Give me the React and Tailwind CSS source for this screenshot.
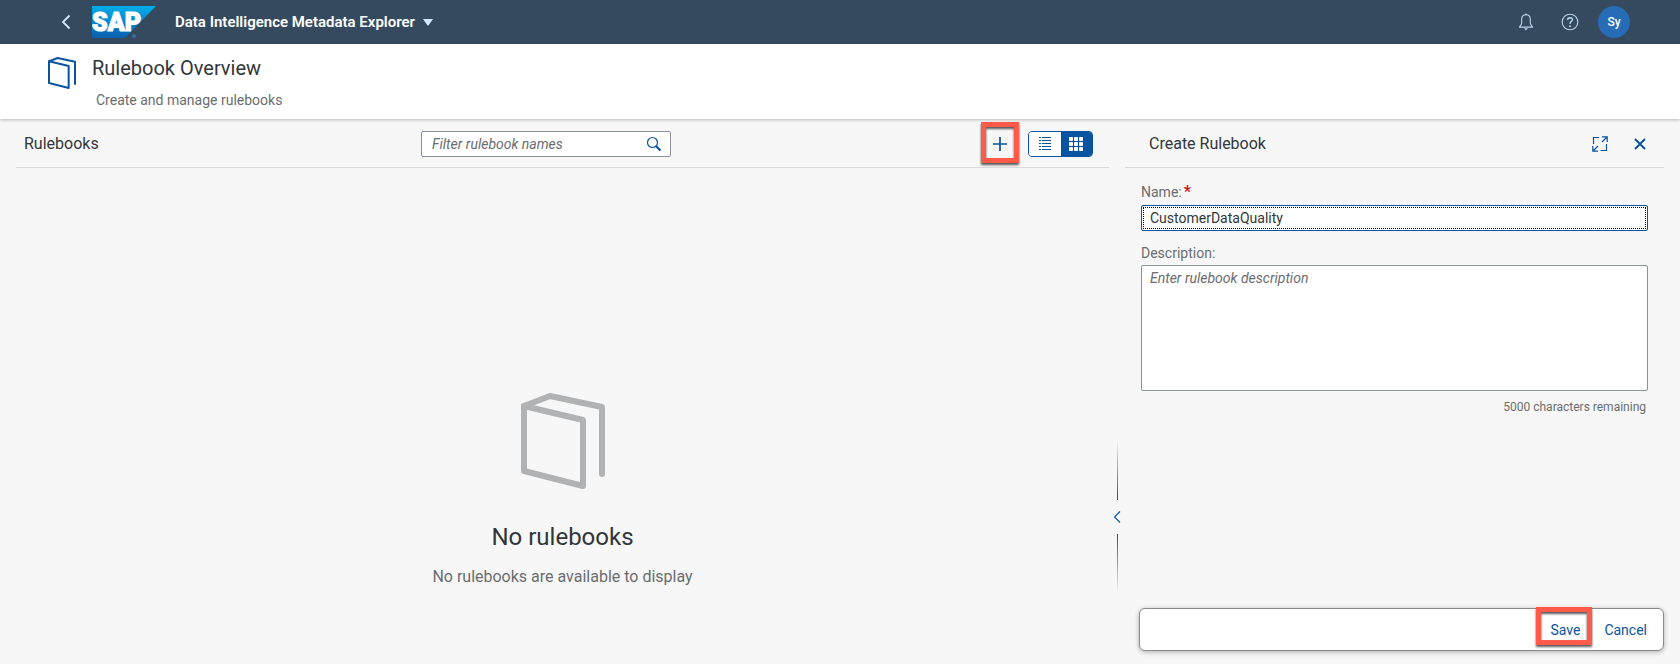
import { useState } from 'react';

function BookIcon({ className, strokeWidth }) {
  return (
    <svg viewBox="0 0 84 96" className={className} fill="none" stroke="currentColor" strokeWidth={strokeWidth} strokeLinejoin="round" strokeLinecap="round" aria-hidden="true">
      <path d="M3 13 L62 27 V93 L3 78 Z" />
      <path d="M3 13 L29 3 L81 14 V81" />
    </svg>
  );
}

function SapLogo() {
  return (
    <svg viewBox="0 0 64 32" className="h-8 w-16" role="img" aria-label="SAP">
      <defs>
        <linearGradient id="logo-fill" x1="0" y1="0" x2="0" y2="1">
          <stop offset="0" stopColor="#00aeea" />
          <stop offset="0.5" stopColor="#0a86cd" />
          <stop offset="1" stopColor="#0a5fae" />
        </linearGradient>
      </defs>
      <path d="M0 0 H64 L33 32 H0 Z" fill="url(#logo-fill)" />
      <text x="0" y="25" fill="#fff" stroke="#fff" strokeWidth="1.2" fontFamily="Roboto, sans-serif" fontWeight="900" fontSize="25">SAP</text>
      <circle cx="42" cy="30" r="1.6" fill="#2d6a9e" stroke="#3f7cae" strokeWidth="0.6" />
    </svg>
  );
}

function ShellBar() {
  return (
    <header className="flex h-11 shrink-0 items-center bg-[#354a5f] pr-[50px] pl-14 text-white">
      <button type="button" aria-label="Back" className="flex h-8 w-5 items-center justify-center text-[#d1e8ff]">
        <svg viewBox="0 0 10 16" className="h-4 w-2.5" fill="none" stroke="currentColor" strokeWidth="1.8" aria-hidden="true">
          <path d="M8.5 1.5 L2 8 L8.5 14.5" />
        </svg>
      </button>
      <a href="#home" className="ml-4">
        <SapLogo />
      </a>
      <button type="button" className="ml-[19px] flex items-center gap-2 text-[15px] font-semibold">
        Data Intelligence Metadata Explorer
        <svg viewBox="0 0 10 8" className="h-2 w-2.5 fill-[#d1e8ff]" aria-hidden="true">
          <path d="M0 1 H10 L5.6 7.2 Q5 8 4.4 7.2 Z" />
        </svg>
      </button>
      <div className="ml-auto flex items-center gap-4 text-[#b9d3ee]">
        <div className="flex items-center gap-5">
          <button type="button" aria-label="Notifications" className="flex size-6 items-center justify-center">
            <svg viewBox="0 0 16 18" className="h-[18px] w-4" fill="none" stroke="currentColor" strokeWidth="1.1" strokeLinejoin="round" aria-hidden="true">
              <path d="M8 1.8 C5 1.8 3.7 3.8 3.7 6.3 V10 Q3.7 11.6 1.4 14.1 H14.6 Q12.3 11.6 12.3 10 V6.3 C12.3 3.8 11 1.8 8 1.8 Z" />
              <path d="M6.2 15.2 H9.8 Q9.5 17 8 17 Q6.5 17 6.2 15.2 Z" fill="currentColor" stroke="none" />
              <circle cx="8" cy="1.4" r="0.9" fill="currentColor" stroke="none" />
            </svg>
          </button>
          <button type="button" aria-label="Help" className="flex size-6 items-center justify-center">
            <svg viewBox="0 0 18 18" className="size-[18px]" fill="none" stroke="currentColor" strokeWidth="1.1" aria-hidden="true">
              <circle cx="9" cy="9" r="7.8" />
              <path d="M6.5 6.9 Q6.6 4.7 9 4.7 Q11.4 4.8 11.4 6.7 Q11.4 7.8 10.2 8.6 Q9 9.4 9 10.9" strokeWidth="1.4" />
              <circle cx="9" cy="13.2" r="1" fill="currentColor" stroke="none" />
            </svg>
          </button>
        </div>
        <button type="button" aria-label="Profile" className="flex size-8 items-center justify-center rounded-full bg-[#266cb7] text-xs font-medium text-white">
          Sy
        </button>
      </div>
    </header>
  );
}

function PageTitle() {
  return (
    <div className="z-10 flex h-[75px] shrink-0 bg-white pt-2 pl-12 shadow-[0_1px_3px_rgba(0,0,0,0.25)]">
      <BookIcon className="mt-[5px] h-8 w-7 text-[#0854a0]" strokeWidth="6" />
      <div className="ml-4">
        <h1 className="text-xl leading-8 text-[#32363a]">Rulebook Overview</h1>
        <p className="pt-1.5 pl-1 text-sm text-[#6a6d70]">Create and manage rulebooks</p>
      </div>
    </div>
  );
}

function Highlight({ className }) {
  return (
    <span className={`pointer-events-none absolute border-[5px] border-[#ff5a4a] drop-shadow-[0_2px_1px_rgba(0,0,0,0.65)] ${className}`} />
  );
}

function ListIcon() {
  return (
    <svg viewBox="0 0 14 14" className="size-3.5" stroke="currentColor" strokeWidth="1" aria-hidden="true">
      {[0.5, 3.5, 6.5, 9.5, 12.5].map((y) => (
        <path key={y} d={`M1 ${y} H3 M4 ${y} H13`} />
      ))}
    </svg>
  );
}

function GridIcon() {
  return (
    <svg viewBox="0 0 14 14" className="size-3.5" fill="currentColor" aria-hidden="true">
      {[0, 5, 10].map((y) => [0, 5, 10].map((x) => <rect key={`${x}-${y}`} x={x} y={y} width="4" height="4" rx="1" />))}
    </svg>
  );
}

function RulebookList() {
  const [view, setView] = useState('grid');
  const on = 'bg-[#0854a0] text-white';
  const off = 'bg-white text-[#0854a0]';
  return (
    <section className="ml-4 flex min-w-0 flex-1 flex-col">
      <div className="grid h-[49px] shrink-0 grid-cols-[397fr_250px_422fr] items-center border-b border-[#d9d9d9] pt-0.5 pr-4 pl-2">
        <h2 className="text-base text-[#32363a]">Rulebooks</h2>
        <div className="flex h-[26px] items-center rounded-xs border border-[#89919a] bg-white pr-2 pl-2.5">
          <input type="search" aria-label="Filter rulebook names" placeholder="Filter rulebook names" className="min-w-0 flex-1 bg-transparent text-sm text-[#32363a] outline-none placeholder:text-[#6a6d70] placeholder:italic" />
          <button type="button" aria-label="Search" className="text-[#0854a0]">
            <svg viewBox="0 0 16 16" className="size-4" fill="none" stroke="currentColor" aria-hidden="true">
              <circle cx="6.5" cy="6.5" r="5" strokeWidth="1.2" />
              <path d="M10.2 10.2 L14.5 14.5" strokeWidth="2.2" />
            </svg>
          </button>
        </div>
        <div className="flex items-center justify-end gap-3">
          <div className="relative">
            <button type="button" aria-label="Create rulebook" className="flex h-[26px] w-8 items-center justify-center text-[#0854a0]">
              <svg viewBox="0 0 14 14" className="size-3.5" stroke="currentColor" strokeWidth="1.7" aria-hidden="true">
                <path d="M7 0 V14 M0 7 H14" />
              </svg>
            </button>
            <Highlight className="-inset-x-[3px] -top-[9px] -bottom-[6px]" />
          </div>
          <div className="flex h-[26px] w-[65px] overflow-hidden rounded border border-[#0854a0]">
            <button type="button" aria-label="List view" onClick={() => setView('list')} className={`flex flex-1 items-center justify-center ${view === 'list' ? on : off}`}>
              <ListIcon />
            </button>
            <button type="button" aria-label="Grid view" onClick={() => setView('grid')} className={`flex flex-1 items-center justify-center ${view === 'grid' ? on : off}`}>
              <GridIcon />
            </button>
          </div>
        </div>
      </div>
      <div className="flex flex-1 flex-col items-center justify-end pb-[75px]">
        <BookIcon className="h-24 w-[84px] text-[#b0b2b3]" strokeWidth="6" />
        <h3 className="mt-8 text-2xl leading-8 text-[#32363a]">No rulebooks</h3>
        <p className="mt-3 text-base leading-6 text-[#6a6d70]">No rulebooks are available to display</p>
      </div>
    </section>
  );
}

function Splitter() {
  return (
    <div className="flex w-4 shrink-0 flex-col items-center justify-end pb-[70px]">
      <span className="h-[60px] w-px bg-linear-to-t from-[#0854a0] to-transparent" />
      <button type="button" aria-label="Collapse panel" className="flex h-[34px] w-4 items-center justify-center text-[#0854a0]">
        <svg viewBox="0 0 8 12" className="h-3 w-2" fill="none" stroke="currentColor" strokeWidth="1.1" aria-hidden="true">
          <path d="M7 0.5 L1.5 6 L7 11.5" />
        </svg>
      </button>
      <span className="h-[60px] w-px bg-linear-to-b from-[#0854a0] to-transparent" />
    </div>
  );
}

function CreatePanel() {
  const [name, setName] = useState('CustomerDataQuality');
  const [description, setDescription] = useState('');
  return (
    <section className="mr-4 flex w-[539px] max-w-[45%] shrink-0 flex-col">
      <div className="flex h-[49px] shrink-0 items-center border-b border-[#d9d9d9] pt-0.5 pr-4 pl-6">
        <h2 className="text-base text-[#32363a]">Create Rulebook</h2>
        <button type="button" aria-label="Full screen" className="ml-auto text-[#0854a0]">
          <svg viewBox="0 0 16 16" className="size-4" fill="none" stroke="currentColor" strokeWidth="1.2" aria-hidden="true">
            <path d="M7 1.5 H1.5 V8 M14.5 8 V14.5 H8.5" />
            <path d="M10 0.8 H15.2 V6 M15 1 L10 6" />
            <path d="M0.8 10 V15.2 H6 M1 15 L6 10" />
          </svg>
        </button>
        <button type="button" aria-label="Close" className="ml-6 flex size-4 items-center justify-center text-[#0854a0]">
          <svg viewBox="0 0 12 12" className="size-3" stroke="currentColor" strokeWidth="1.9" aria-hidden="true">
            <path d="M1 1 L11 11 M11 1 L1 11" />
          </svg>
        </button>
      </div>
      <div className="flex flex-col px-4 pt-3">
        <label htmlFor="rulebook-name" className="text-sm leading-6 text-[#6a6d70]">
          Name:<span className="ml-0.5 text-base leading-none font-bold text-[#cc1919]">*</span>
        </label>
        <div className="mt-px rounded-xs border border-[#0854a0] bg-white p-px">
          <input id="rulebook-name" required value={name} onChange={(e) => setName(e.target.value)} className="block h-[22px] w-full border border-dotted border-black px-1.5 text-sm text-[#32363a] outline-none" />
        </div>
        <label htmlFor="rulebook-description" className="mt-2.5 text-sm leading-6 text-[#6a6d70]">
          Description:
        </label>
        <textarea id="rulebook-description" value={description} onChange={(e) => setDescription(e.target.value)} placeholder="Enter rulebook description" className="h-[126px] resize-none rounded-xs border border-[#89919a] bg-white px-2 py-0.5 text-sm text-[#32363a] outline-none placeholder:text-[#6a6d70] placeholder:italic" />
        <p className="mt-2 pr-0.5 text-right text-xs text-[#6a6d70]">{5000 - description.length} characters remaining</p>
      </div>
      <footer className="mt-auto mb-[13px] ml-3.5 flex h-[43px] items-center justify-end gap-6 rounded-md border border-[#8a8a8a] bg-white pr-4 text-sm text-[#0854a0] shadow-[0_1px_5px_rgba(0,0,0,0.3)]">
        <div className="relative">
          <button type="button">Save</button>
          <Highlight className="-top-[13px] -right-3 -bottom-[5px] -left-3.5" />
        </div>
        <button type="button">Cancel</button>
      </footer>
    </section>
  );
}

export default function App() {
  return (
    <div className="flex min-h-screen flex-col bg-[#f7f7f7] font-['Roboto','Noto_Sans',sans-serif]">
      <ShellBar />
      <PageTitle />
      <main className="flex flex-1">
        <RulebookList />
        <Splitter />
        <CreatePanel />
      </main>
    </div>
  );
}
